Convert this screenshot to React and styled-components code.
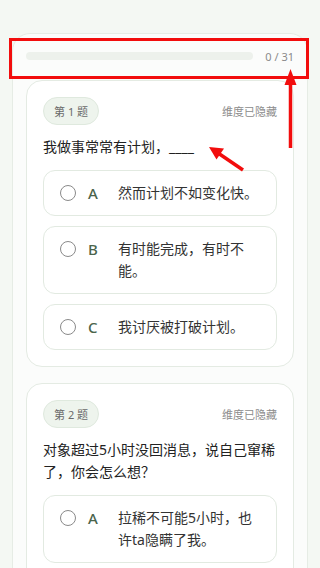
import React from "react";
import styled, { createGlobalStyle } from "styled-components";

const GlobalStyle = createGlobalStyle`
  html, body {
    margin: 0;
    padding: 0;
    background: #f4f8f3;
  }
  body {
    font-family: "Noto Sans", "Noto Sans CJK SC", sans-serif;
    color: #222;
  }
  * { box-sizing: border-box; }
`;

const questions = [
  {
    id: 1,
    text: "我做事常常有计划，____",
    options: [
      { key: "A", text: "然而计划不如变化快。" },
      { key: "B", text: "有时能完成，有时不能。" },
      { key: "C", text: "我讨厌被打破计划。" },
    ],
  },
  {
    id: 2,
    text: "对象超过5小时没回消息，说自己窜稀了，你会怎么想？",
    options: [
      { key: "A", text: "拉稀不可能5小时，也许ta隐瞒了我。" },
      { key: "B", text: "可能真的拉肚子了，关心一下。" },
    ],
  },
];

const Page = styled.div`
  position: relative;
  min-height: 100vh;
  padding: 33px 12px 20px;
`;

const Panel = styled.div`
  background: #fbfcfb;
  border: 1px solid #e6ece5;
  border-radius: 18px;
  padding: 11px 13px 16px;
`;

const Header = styled.div`
  display: flex;
  align-items: center;
  height: 22px;
  margin-bottom: 13px;
`;

const Track = styled.div`
  flex: 1;
  height: 8px;
  border-radius: 4px;
  background: #edf1ec;
`;

const Count = styled.span`
  margin-left: 12px;
  font-size: 11px;
  color: #8a8a8a;
`;

const List = styled.div`
  display: flex;
  flex-direction: column;
  gap: 16px;
`;

const Card = styled.div`
  background: #fff;
  border: 1px solid #e4ebe3;
  border-radius: 16px;
  padding: 16px;
`;

const CardTop = styled.div`
  display: flex;
  justify-content: space-between;
  align-items: center;
`;

const Badge = styled.span`
  display: inline-flex;
  align-items: center;
  height: 28px;
  padding: 0 10px;
  border-radius: 14px;
  background: #eef4ed;
  border: 1px solid #dfe9de;
  font-size: 11px;
  color: #6a6a6a;
`;

const Hidden = styled.span`
  font-size: 11px;
  color: #8c8c8c;
`;

const Question = styled.p`
  margin: 11px 0 12px;
  font-size: 14px;
  line-height: 22px;
  color: #222;
`;

const Options = styled.div`
  display: flex;
  flex-direction: column;
  gap: 10px;
`;

const Option = styled.div`
  display: flex;
  align-items: flex-start;
  padding: 11px 15px 11px 16px;
  border: 1px solid #e2eae1;
  border-radius: 12px;
  background: #fff;
`;

const Radio = styled.span`
  flex: none;
  width: 16px;
  height: 16px;
  margin-top: 3px;
  border-radius: 50%;
  border: 1.5px solid #8a8a8a;
`;

const Letter = styled.span`
  flex: none;
  width: 18px;
  margin-left: 12px;
  font-size: 15px;
  line-height: 22px;
  font-weight: 500;
  color: #4b644b;
`;

const OptionText = styled.span`
  flex: 1;
  margin-left: 12px;
  font-size: 14px;
  line-height: 22px;
  color: #333;
`;

const Overlay = styled.svg`
  position: absolute;
  top: 0;
  left: 0;
  pointer-events: none;
`;

const Annotations = () => (
  <Overlay width="320" height="568" viewBox="0 0 320 568">
    <rect x="10.5" y="39.5" width="297" height="38" fill="none" stroke="#f20d0d" strokeWidth="3" />
    <line x1="290.5" y1="148" x2="290.5" y2="82" stroke="#f20d0d" strokeWidth="3.5" />
    <polygon points="290.5,69 284.5,85 296.5,85" fill="#f20d0d" />
    <line x1="243" y1="170" x2="218" y2="153" stroke="#f20d0d" strokeWidth="3.5" />
    <polygon points="209,147 224,148.5 216.5,159.5" fill="#f20d0d" />
  </Overlay>
);

export default function App() {
  return (
    <>
      <GlobalStyle />
      <Page>
        <Panel>
          <Header>
            <Track />
            <Count>0 / 31</Count>
          </Header>
          <List>
            {questions.map((q) => (
              <Card key={q.id}>
                <CardTop>
                  <Badge>第 {q.id} 题</Badge>
                  <Hidden>维度已隐藏</Hidden>
                </CardTop>
                <Question>{q.text}</Question>
                <Options>
                  {q.options.map((o) => (
                    <Option key={o.key}>
                      <Radio />
                      <Letter>{o.key}</Letter>
                      <OptionText>{o.text}</OptionText>
                    </Option>
                  ))}
                </Options>
              </Card>
            ))}
          </List>
        </Panel>
        <Annotations />
      </Page>
    </>
  );
}
